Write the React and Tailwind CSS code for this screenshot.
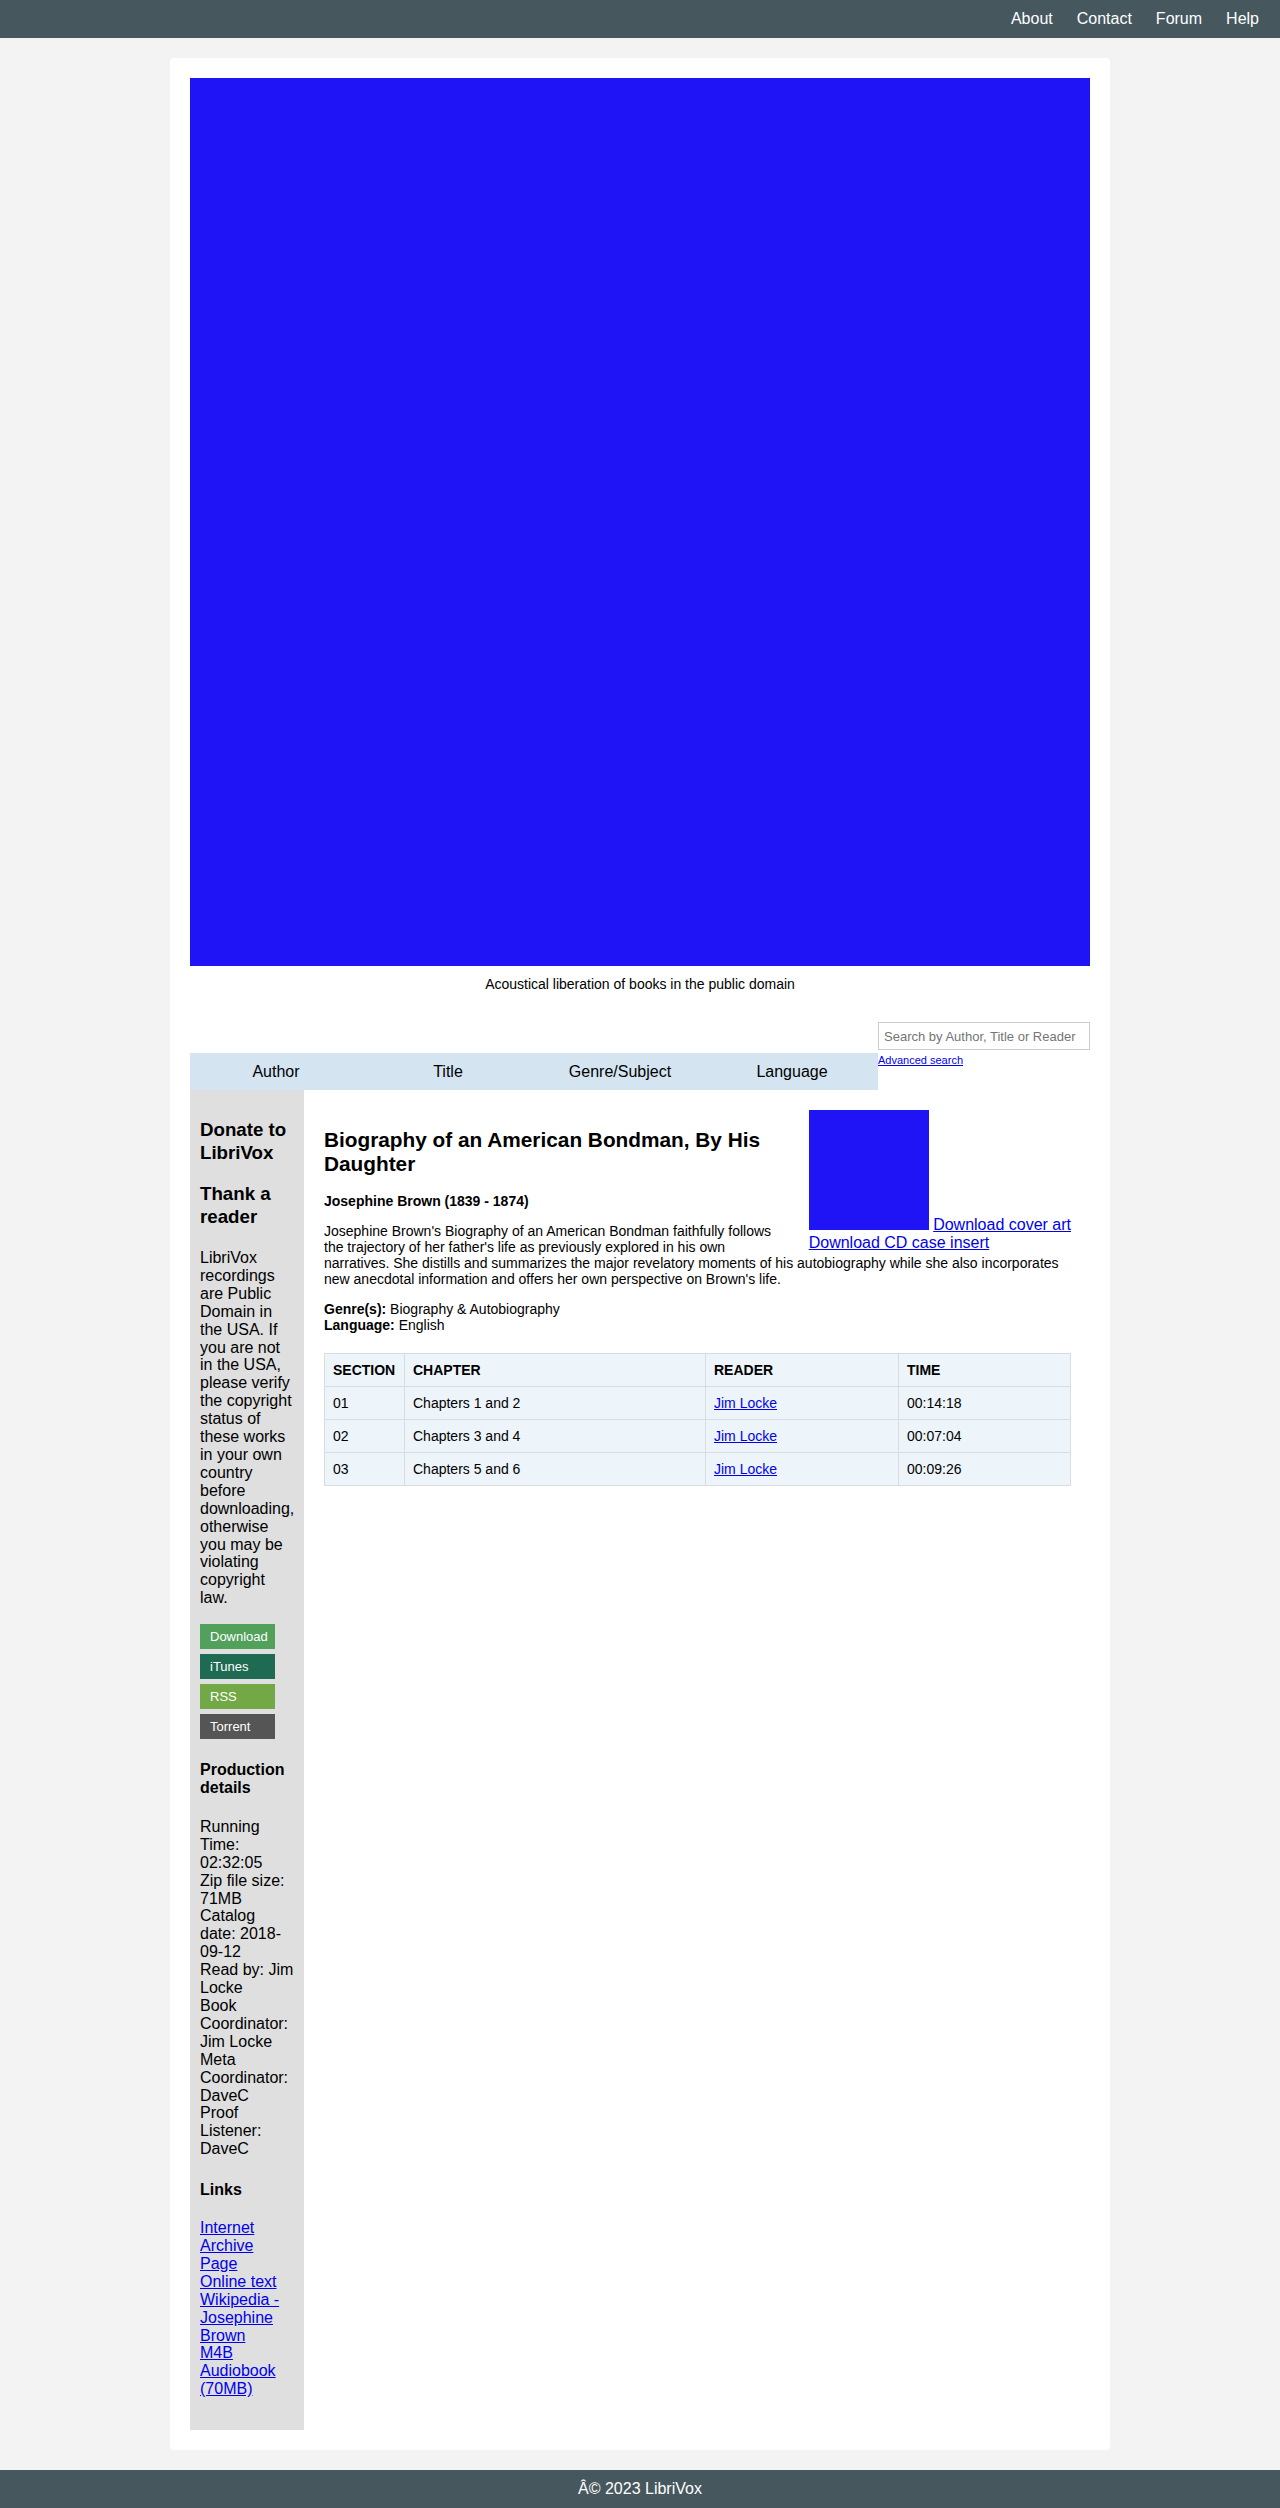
import React from "react";

const navLinks = ["About", "Contact", "Forum", "Help"];
const browseTabs = ["Author", "Title", "Genre/Subject", "Language"];

const sections = [
  { id: "01", chapter: "Chapters 1 and 2", reader: "Jim Locke", time: "00:14:18" },
  { id: "02", chapter: "Chapters 3 and 4", reader: "Jim Locke", time: "00:07:04" },
  { id: "03", chapter: "Chapters 5 and 6", reader: "Jim Locke", time: "00:09:26" },
];

const buttons = [
  { label: "Download", cls: "bg-[#51a05b]" },
  { label: "iTunes", cls: "bg-[#1e6a52]" },
  { label: "RSS", cls: "bg-[#72a946]" },
  { label: "Torrent", cls: "bg-[#555555]" },
];

const App = () => {
  return (
    <div className="min-h-screen flex flex-col bg-[#f3f3f3] text-black font-['Liberation_Sans',Arial,sans-serif]">
      {/* Top bar */}
      <nav className="h-[38px] bg-[#46575e] flex items-center justify-end pr-[9px]">
        {navLinks.map((link) => (
          <a key={link} href="#" className="px-[12px] text-[16px] text-white">
            {link}
          </a>
        ))}
      </nav>

      {/* Page card */}
      <main className="w-[940px] mx-auto mt-[20px] mb-[20px] bg-white rounded-[4px] p-[20px]">
        <div className="w-full h-[888px] bg-[#1e14f5]"></div>
        <p className="mt-[10px] text-center text-[14px] leading-[16px]">
          Acoustical liberation of books in the public domain
        </p>

        {/* Browse tabs + search */}
        <div className="mt-[30px] flex">
          <div className="flex-1 flex flex-col justify-end">
            <ul className="h-[37px] bg-[#d4e5f1] grid grid-cols-4 items-center text-center text-[16px]">
              {browseTabs.map((tab) => (
                <li key={tab}>{tab}</li>
              ))}
            </ul>
          </div>
          <div className="w-[212px] pb-[23px]">
            <input
              type="text"
              placeholder="Search by Author, Title or Reader"
              className="w-full h-[28px] border border-[#cccccc] px-[5px] text-[13px] placeholder:text-[#757575] outline-none"
            />
            <a href="#" className="block mt-[4px] text-[11px] leading-[13px] text-[#0000ee] underline">
              Advanced search
            </a>
          </div>
        </div>

        <div className="flex">
          {/* Sidebar */}
          <aside className="w-[114px] shrink-0 bg-[#dfdfdf] px-[10px] pt-[10px] pb-[32px] text-[16px] leading-[17.9px]">
            <h3 className="mt-[19px] text-[18.72px] leading-[22.5px] font-bold">Donate to LibriVox</h3>
            <h3 className="mt-[19px] text-[18.72px] leading-[22.5px] font-bold">Thank a reader</h3>
            <p className="mt-[21px]">
              LibriVox recordings are Public Domain in the USA. If you are not in the USA, please verify the
              copyright status of these works in your own country before downloading, otherwise you may be
              violating copyright law.
            </p>
            <div className="mt-[17px] flex flex-col gap-[5px]">
              {buttons.map((b) => (
                <a
                  key={b.label}
                  href="#"
                  className={`block w-[75px] h-[25px] leading-[25px] pl-[10px] text-[13px] text-white ${b.cls}`}
                >
                  {b.label}
                </a>
              ))}
            </div>
            <h4 className="mt-[22px] font-bold">Production details</h4>
            <p className="mt-[21px]">
              Running Time: 02:32:05
              <br />
              Zip file size: 71MB
              <br />
              Catalog date: 2018-09-12
              <br />
              Read by: Jim Locke
              <br />
              Book Coordinator: Jim Locke
              <br />
              Meta Coordinator: DaveC
              <br />
              Proof Listener: DaveC
            </p>
            <h4 className="mt-[23px] font-bold">Links</h4>
            <p className="mt-[20px]">
              <a href="#" className="text-[#0000ee] underline">Internet Archive Page</a>
              <br />
              <a href="#" className="text-[#0000ee] underline">Online text</a>
              <br />
              <a href="#" className="text-[#0000ee] underline">Wikipedia - Josephine Brown</a>
              <br />
              <a href="#" className="text-[#0000ee] underline">M4B Audiobook (70MB)</a>
            </p>
          </aside>

          {/* Book details */}
          <section className="flex-1 p-[20px] text-[14px] leading-[16px]">
            <div className="float-right ml-[20px] text-[16px] leading-[17.9px]">
              <span className="inline-block w-[120px] h-[120px] bg-[#1e14f5] align-baseline"></span>{" "}
              <a href="#" className="text-[#0000ee] underline">Download cover art</a>
              <br />
              <a href="#" className="text-[#0000ee] underline">Download CD case insert</a>
            </div>
            <h2 className="mt-[18px] mb-[17px] text-[20.8px] leading-[24px] font-bold">
              Biography of an American Bondman, By His Daughter
            </h2>
            <p className="font-bold">Josephine Brown (1839 - 1874)</p>
            <p className="mt-[14px]">
              Josephine Brown's Biography of an American Bondman faithfully follows the trajectory of her
              father's life as previously explored in his own narratives. She distills and summarizes the major
              revelatory moments of his autobiography while she also incorporates new anecdotal information and
              offers her own perspective on Brown's life.
            </p>
            <p className="mt-[14px]">
              <b>Genre(s):</b> Biography &amp; Autobiography
              <br />
              <b>Language:</b> English
            </p>

            <table className="clear-both mt-[20px] w-full table-fixed border-collapse bg-[#edf4fa] text-left">
              <colgroup>
                <col className="w-[80px]" />
                <col className="w-[301px]" />
                <col className="w-[193px]" />
                <col className="w-[172px]" />
              </colgroup>
              <thead>
                <tr>
                  {["SECTION", "CHAPTER", "READER", "TIME"].map((h) => (
                    <th key={h} className="border border-[#d8dde1] px-[8px] py-[8px] font-bold">
                      {h}
                    </th>
                  ))}
                </tr>
              </thead>
              <tbody>
                {sections.map((s) => (
                  <tr key={s.id}>
                    <td className="border border-[#d8dde1] px-[8px] py-[8px]">{s.id}</td>
                    <td className="border border-[#d8dde1] px-[8px] py-[8px]">{s.chapter}</td>
                    <td className="border border-[#d8dde1] px-[8px] py-[8px]">
                      <a href="#" className="text-[#0000ee] underline">{s.reader}</a>
                    </td>
                    <td className="border border-[#d8dde1] px-[8px] py-[8px]">{s.time}</td>
                  </tr>
                ))}
              </tbody>
            </table>
          </section>
        </div>
      </main>

      <footer className="h-[38px] bg-[#46575e] flex items-center justify-center text-[16px] text-white">
        Â© 2023 LibriVox
      </footer>
    </div>
  );
};

export default App;
